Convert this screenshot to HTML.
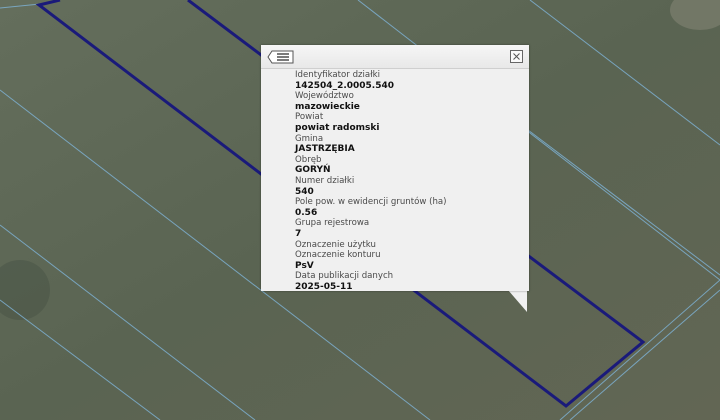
<!DOCTYPE html>
<html><head><meta charset="utf-8"><style>
body{margin:0;width:720px;height:420px;overflow:hidden;background:#5d6655;position:relative;font-family:"DejaVu Sans","Liberation Sans",sans-serif}
svg{position:absolute;left:0;top:0}
#pop{position:absolute;left:261px;top:45px;width:268px;height:246px;background:#f0f0f0;box-shadow:0 0 2px rgba(0,0,0,.4)}
#hd{height:23px;background:linear-gradient(#f6f6f6,#e8e8e8);border-bottom:1px solid #cfcfcf}
#txt{position:absolute;left:34px;top:25px;font-size:8.6px;line-height:10.6px;color:#4a4a4a}
#txt b{color:#111;font-weight:bold;display:block;font-size:9px}
#txt span{display:block}
</style></head><body>
<svg width="720" height="420">
<defs><linearGradient id="g" x1="0" y1="0" x2="1" y2="1"><stop offset="0" stop-color="#646e5c"/><stop offset=".5" stop-color="#5a6452"/><stop offset="1" stop-color="#626654"/></linearGradient></defs>
<rect width="720" height="420" fill="url(#g)"/>
<ellipse cx="20" cy="290" rx="30" ry="30" fill="#3f4a3e" opacity=".35"/>
<ellipse cx="700" cy="10" rx="30" ry="20" fill="#8a8a7a" opacity=".5"/>
<g stroke="#7fb4d8" stroke-width="1" fill="none" opacity=".8">
<line x1="358" y1="0" x2="720" y2="280"/>
<line x1="530" y1="0" x2="720" y2="145"/>
<line x1="0" y1="90" x2="430" y2="420"/>
<line x1="0" y1="225" x2="255" y2="420"/>
<line x1="0" y1="300" x2="160" y2="420"/>
<line x1="528" y1="130" x2="720" y2="275"/>
<line x1="0" y1="8" x2="40" y2="4"/>
<line x1="720" y1="280" x2="560" y2="420"/>
<line x1="720" y1="290" x2="570" y2="420"/>
</g>
<polyline points="60,0 39,5 566,406 643,342 188,0" stroke="#1a1a7a" stroke-width="3" fill="none"/>
<polygon points="508,290 527,290 527,312" fill="#f0f0f0"/>
</svg>
<div id="pop"><div id="hd">
<svg width="28" height="14" style="left:6px;top:5px"><path d="M5,1 H26 V13 H5 L1,7 Z" fill="#fff" stroke="#555"/><g stroke="#333" stroke-width="1.3"><line x1="10" y1="4" x2="22" y2="4"/><line x1="10" y1="7" x2="22" y2="7"/><line x1="10" y1="10" x2="22" y2="10"/></g></svg>
<svg width="14" height="14" style="left:249px;top:5px"><rect x=".5" y=".5" width="12" height="12" fill="#fafafa" stroke="#666"/><path d="M3.5,3.5 L9.5,9.5 M9.5,3.5 L3.5,9.5" stroke="#555"/></svg>
</div>
<div id="txt">
<span>Identyfikator działki</span><b>142504_2.0005.540</b>
<span>Województwo</span><b>mazowieckie</b>
<span>Powiat</span><b>powiat radomski</b>
<span>Gmina</span><b>JASTRZĘBIA</b>
<span>Obręb</span><b>GORYŃ</b>
<span>Numer działki</span><b>540</b>
<span>Pole pow. w ewidencji gruntów (ha)</span><b>0.56</b>
<span>Grupa rejestrowa</span><b>7</b>
<span>Oznaczenie użytku</span>
<span>Oznaczenie konturu</span><b>PsV</b>
<span>Data publikacji danych</span><b>2025-05-11</b>
</div></div>
</body></html>
